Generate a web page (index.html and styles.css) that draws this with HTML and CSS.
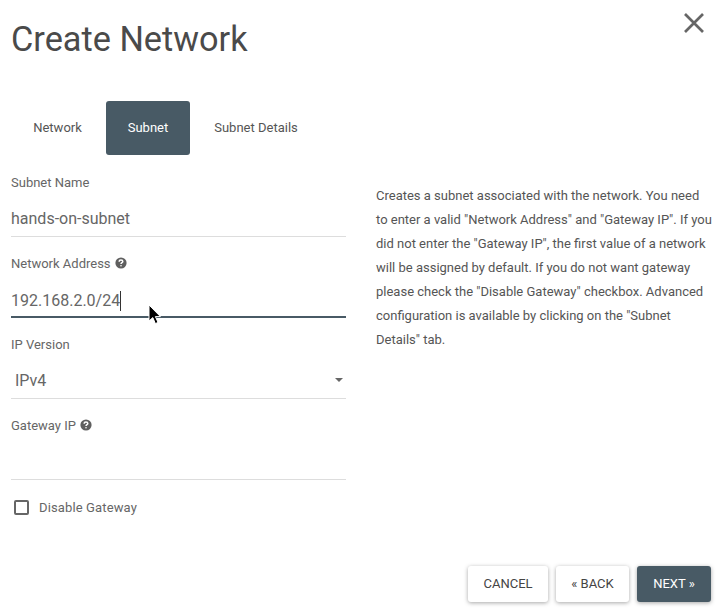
FILE: index.html
```html
<!DOCTYPE html>
<html lang="en">
<head>
<meta charset="utf-8">
<title>Create Network</title>
<link rel="stylesheet" href="styles.css">
</head>
<body>
<div class="modal">
  <header class="header">
    <h1 class="title">Create Network</h1>
    <button class="close" aria-label="Close">
      <svg class="close-icon" width="20" height="20" viewBox="0 0 20 20"><path d="M1 1L19 19M19 1L1 19"/></svg>
    </button>
  </header>
  <nav class="tabs">
    <a class="tab">Network</a>
    <a class="tab tab-active">Subnet</a>
    <a class="tab">Subnet Details</a>
  </nav>
  <div class="content">
    <form class="fields">
      <div class="field">
        <label class="label">Subnet Name</label>
        <div class="value">hands-on-subnet</div>
      </div>
      <div class="field field-focus">
        <label class="label">Network Address
          <svg class="help" width="12" height="12" viewBox="0 0 12 12"><circle cx="6" cy="6" r="5.6"/><path class="help-q" d="M4.2 4.7C4.2 3.6 5 3 6 3s1.8.6 1.8 1.5C7.8 5.7 6 5.7 6 7"/><circle class="help-dot" cx="6" cy="8.8" r=".8"/></svg>
        </label>
        <div class="value"><span class="caret-text">192.168.2.0/24</span></div>
        <svg class="cursor" width="14" height="22" viewBox="0 0 14 22"><path d="M1 1V17L4.8 13.6L7.4 19.6L10 18.4L7.4 12.6H12.4Z"/></svg>
      </div>
      <div class="field">
        <label class="label">IP Version</label>
        <div class="value value-select">IPv4<span class="arrow"></span></div>
      </div>
      <div class="field">
        <label class="label">Gateway IP
          <svg class="help" width="12" height="12" viewBox="0 0 12 12"><circle cx="6" cy="6" r="5.6"/><path class="help-q" d="M4.2 4.7C4.2 3.6 5 3 6 3s1.8.6 1.8 1.5C7.8 5.7 6 5.7 6 7"/><circle class="help-dot" cx="6" cy="8.8" r=".8"/></svg>
        </label>
        <div class="value"></div>
      </div>
      <div class="check-row">
        <span class="check"></span>
        <span class="check-label">Disable Gateway</span>
      </div>
    </form>
    <p class="description">Creates a subnet associated with the network. You need to enter a valid "Network Address" and "Gateway IP". If you did not enter the "Gateway IP", the first value of a network will be assigned by default. If you do not want gateway please check the "Disable Gateway" checkbox. Advanced configuration is available by clicking on the "Subnet Details" tab.</p>
  </div>
  <footer class="footer">
    <button class="btn">CANCEL</button>
    <button class="btn">« BACK</button>
    <button class="btn btn-primary">NEXT »</button>
  </footer>
</div>
</body>
</html>
```
FILE: styles.css
```css
* { box-sizing: border-box; }
html, body { margin: 0; padding: 0; background: #fff; }
body { font-family: Roboto, sans-serif; color: #555; overflow: hidden; }
.modal { width: 722px; height: 611px; display: flex; flex-direction: column; padding: 0 11px; }
.header { display: flex; justify-content: space-between; align-items: flex-start; height: 101px; }
.title { margin: 18px 0 0; font-size: 34.3px; line-height: 42px; font-weight: 400; color: #4a4a4a; }
.close { border: 0; background: none; padding: 0; margin: 13px 7px 0 0; width: 20px; height: 20px; display: block; }
.close-icon { display: block; fill: none; stroke: #666; stroke-width: 2.7; }
.tabs { display: flex; height: 54px; }
.tab { display: flex; align-items: center; justify-content: center; font-size: 13px; line-height: 53px; padding-bottom: 1px; color: #555; border-radius: 3px; }
.tab:nth-child(1) { width: 95px; padding-right: 2px; }
.tab:nth-child(2) { width: 84px; }
.tab:nth-child(3) { width: 133px; padding-right: 1px; }
.tab-active { background: #485a65; color: #fff; }
.content { display: flex; gap: 30px; align-items: flex-start; }
.fields { width: 335px; flex: none; display: flex; flex-direction: column; padding-top: 19px; }
.field { position: relative; height: 81px; }
.label { display: flex; align-items: center; gap: 4px; height: 16px; font-size: 13px; color: #666; }
.help circle:first-child { fill: #5f5f5f; }
.help { display: block; }
.help-q { fill: none; stroke: #fff; stroke-width: 1.5; }
.help-dot { fill: #fff; }
.value { height: 47px; padding-top: 17px; font-size: 16px; line-height: 24px; color: #666; border-bottom: 1px solid #ddd; }
.field-focus .value { border-bottom: 2px solid #485a65; padding-top: 18px; }
.caret-text { display: inline-block; border-right: 1px solid #333; line-height: 20px; }
.cursor { position: absolute; left: 137px; top: 49px; fill: #000; stroke: #fff; stroke-width: 1; }
.value-select { position: relative; padding-left: 4px; }
.arrow { position: absolute; right: 3px; top: 26px; width: 0; height: 0; border-left: 4px solid transparent; border-right: 4px solid transparent; border-top: 4px solid #666; }
.check-row { display: flex; align-items: center; gap: 10.5px; margin-top: 2px; padding-left: 2.5px; }
.check { width: 15px; height: 15px; border: 2px solid #666; border-radius: 2px; }
.check-label { font-size: 13px; color: #666; letter-spacing: .13px; }
.description { width: 336.5px; flex: none; margin: 29px 0 0; font-size: 13px; line-height: 24px; color: #555; }
.footer { margin-top: auto; display: flex; justify-content: flex-end; gap: 8px; padding: 0 0 9px; }
.btn { height: 36px; border: 0; border-radius: 3px; background: #fff; color: #444; font-family: Roboto, sans-serif; font-size: 13px; padding: 0 0 2px; box-shadow: 0 1px 4px rgba(0,0,0,.35); }
.btn:nth-child(1) { width: 80px; }
.btn:nth-child(2) { width: 73px; }
.btn-primary { width: 74px; background: #485a65; color: #fff; }
```
